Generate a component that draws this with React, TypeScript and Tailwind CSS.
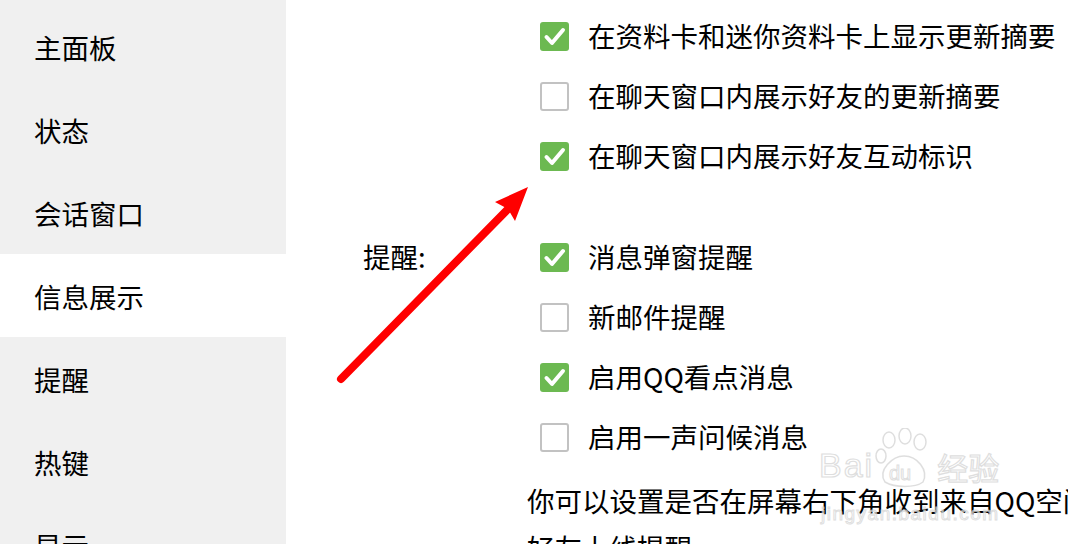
import React from "react";

const sideItems = ["主面板", "状态", "会话窗口", "信息展示", "提醒", "热键", "显示"];

function Check({ checked }: { checked: boolean }) {
  if (checked) {
    return (
      <div className="w-[29px] h-[29px] shrink-0 rounded-[3px] bg-[#6cb951] flex items-center justify-center">
        <svg width="29" height="29" viewBox="0 0 29 29">
          <path d="M6.5 15 L12 21 L23 8" fill="none" stroke="white" strokeWidth="4" strokeLinecap="round" strokeLinejoin="round" />
        </svg>
      </div>
    );
  }
  return <div className="w-[29px] h-[29px] shrink-0 rounded-[3px] border-2 border-[#c2c2c2] bg-white" />;
}

function Row({ checked, label }: { checked: boolean; label: string }) {
  return (
    <div className="h-[60px] flex items-center gap-[19px]">
      <Check checked={checked} />
      <span className="whitespace-nowrap">{label}</span>
    </div>
  );
}

export default function App() {
  return (
    <div className="relative w-[1068px] h-[544px] overflow-hidden bg-white flex text-[27.5px] text-black font-['Noto_Sans_CJK_SC','Noto_Sans',sans-serif]">
      <div className="w-[286px] shrink-0 bg-[#f0f0f0] pt-[5px] flex flex-col">
        {sideItems.map((s) => (
          <div
            key={s}
            className={`h-[83px] shrink-0 flex items-center pl-[34px] pt-[3px] ${s === "信息展示" ? "bg-white" : ""}`}
          >
            {s}
          </div>
        ))}
      </div>
      <div className="flex-1 flex flex-col">
        <div className="pt-[6px] pl-[254px] flex flex-col">
          <Row checked label="在资料卡和迷你资料卡上显示更新摘要" />
          <Row checked={false} label="在聊天窗口内展示好友的更新摘要" />
          <Row checked label="在聊天窗口内展示好友互动标识" />
        </div>
        <div className="mt-[41px] flex pl-[77px]">
          <div className="w-[177px] shrink-0 h-[60px] flex items-center">提醒:</div>
          <div className="flex flex-col">
            <Row checked label="消息弹窗提醒" />
            <Row checked={false} label="新邮件提醒" />
            <Row checked label="启用QQ看点消息" />
            <Row checked={false} label="启用一声问候消息" />
          </div>
        </div>
        <div className="mt-[10px] pl-[241px] leading-[47px] whitespace-nowrap">
          <div>你可以设置是否在屏幕右下角收到来自QQ空间的</div>
          <div>好友上线提醒</div>
        </div>
      </div>

      {/* watermark */}
      <div className="absolute left-[819px] top-[428px] pointer-events-none opacity-75">
        <div className="flex items-end h-[58px]">
          <span className="text-[34px] leading-none font-['Liberation_Sans',sans-serif] text-white [-webkit-text-stroke:1.2px_#d4d4d4] tracking-[2px] mb-[4px]">Bai</span>
          <svg width="60" height="62" viewBox="0 0 60 62" className="-mb-[4px] -ml-[1px]">
            <g fill="none" stroke="#d4d4d4" strokeWidth="1.5">
              <ellipse cx="16" cy="12" rx="6" ry="8" />
              <ellipse cx="32" cy="8" rx="6" ry="8" />
              <ellipse cx="47" cy="14" rx="6" ry="8" />
              <ellipse cx="8" cy="28" rx="5" ry="7" />
              <path d="M12 54 C4 42 20 28 31 28 C44 28 56 42 50 54 C42 60 22 60 12 54 Z" />
            </g>
            <text x="16" y="52" fontSize="20" fill="white" stroke="#d4d4d4" strokeWidth="1" fontFamily="Liberation Sans">du</text>
          </svg>
          <span className="text-[31px] leading-none text-white [-webkit-text-stroke:1.2px_#d4d4d4] mb-[4px] ml-[4px]">经验</span>
        </div>
        <div className="text-[19px] leading-none mt-[18px] ml-[2px] font-['Liberation_Sans',sans-serif] text-white [-webkit-text-stroke:1px_#d4d4d4] tracking-[1.5px]">jingyan.baidu.com</div>
      </div>

      {/* red annotation arrow */}
      <svg className="absolute left-0 top-0 pointer-events-none" width="1068" height="544" viewBox="0 0 1068 544">
        <line x1="341" y1="379" x2="508" y2="209" stroke="#ff0000" strokeWidth="8" strokeLinecap="round" />
        <polygon points="528,187 495,202 508,209 515,221" fill="#ff0000" />
      </svg>
    </div>
  );
}
